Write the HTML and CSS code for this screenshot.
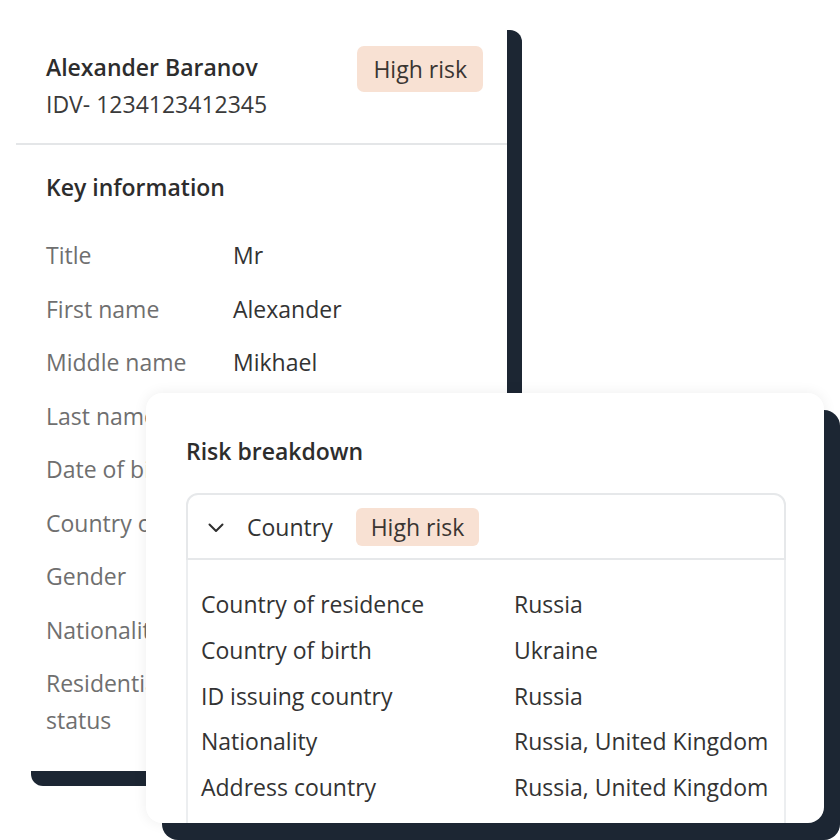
FILE: index.html
```html
<!DOCTYPE html>
<html lang="en">
<head>
<meta charset="utf-8">
<title>Risk profile</title>
<link rel="stylesheet" href="styles.css">
</head>
<body>
<div class="stage">
  <section class="profile-card">
    <header class="profile-head">
      <div class="ident">
        <div class="name">Alexander Baranov</div>
        <div class="idv">IDV- 1234123412345</div>
      </div>
      <span class="badge badge-lg">High risk</span>
    </header>
    <div class="key-info">
      <h2 class="section-title">Key information</h2>
      <dl class="info-grid">
        <dt>Title</dt><dd>Mr</dd>
        <dt>First name</dt><dd>Alexander</dd>
        <dt>Middle name</dt><dd>Mikhael</dd>
        <dt>Last name</dt><dd>Baranov</dd>
        <dt>Date of birth</dt><dd>01/01/1980</dd>
        <dt>Country of birth</dt><dd>Ukraine</dd>
        <dt>Gender</dt><dd>Male</dd>
        <dt>Nationality</dt><dd>Russian</dd>
        <dt>Residential status</dt><dd>Resident</dd>
      </dl>
    </div>
  </section>

  <section class="risk-card">
    <h2 class="section-title">Risk breakdown</h2>
    <div class="accordion">
      <div class="acc-head">
        <svg class="chev" width="16" height="10" viewBox="0 0 16 10" aria-hidden="true"><path d="M1.5 1.5 L8 8 L14.5 1.5" fill="none" stroke="#2f2f2f" stroke-width="2" stroke-linecap="round" stroke-linejoin="round"/></svg>
        <span class="acc-title">Country</span>
        <span class="badge badge-sm">High risk</span>
      </div>
      <dl class="acc-body">
        <dt>Country of residence</dt><dd>Russia</dd>
        <dt>Country of birth</dt><dd>Ukraine</dd>
        <dt>ID issuing country</dt><dd>Russia</dd>
        <dt>Nationality</dt><dd>Russia, United Kingdom</dd>
        <dt>Address country</dt><dd>Russia, United Kingdom</dd>
      </dl>
    </div>
  </section>
</div>
</body>
</html>
```

FILE: styles.css
```css
* { box-sizing: border-box; }

html, body {
  margin: 0;
  padding: 0;
  background: #ffffff;
  font-family: "Open Sans", "Noto Sans", sans-serif;
  font-size: 23px;
  color: #333333;
}

.stage {
  position: relative;
  width: 840px;
  height: 840px;
  overflow: hidden;
  padding: 15px 0 0 16px;
}

.profile-card {
  width: 491px;
  height: 756px;
  background: #ffffff;
  border-radius: 12px;
  box-shadow: 15px 15px 0 0 #1c2633;
}

.profile-head {
  display: flex;
  justify-content: space-between;
  align-items: flex-start;
  padding: 31px 24px 24px 30px;
  border-bottom: 2px solid #e4e6e8;
}

.ident { margin-top: 6px; }

.name {
  font-weight: 600;
  line-height: 30px;
  color: #2d2d2d;
}

.idv {
  margin-top: 7px;
  line-height: 30px;
  color: #3a3a3a;
}

.badge {
  display: inline-block;
  background: #f8e1d3;
  color: #3a3532;
  border-radius: 7px;
  white-space: nowrap;
}

.badge-lg {
  height: 46px;
  line-height: 46px;
  padding: 0 16px;
}

.badge-sm {
  height: 38px;
  line-height: 38px;
  padding: 0 15px;
  border-radius: 6px;
}

.key-info {
  padding: 24px 24px 30px 30px;
}

.section-title {
  margin: 0;
  font-size: 23px;
  font-weight: 600;
  line-height: 37px;
  color: #2d2d2d;
}

.info-grid {
  display: grid;
  grid-template-columns: 182px 1fr;
  column-gap: 5px;
  row-gap: 16.5px;
  margin: 31px 0 0;
  line-height: 37px;
}

.info-grid dt {
  color: #6f6f6f;
}

.info-grid dd {
  margin: 0;
  color: #333333;
}

.risk-card {
  position: absolute;
  left: 146px;
  top: 393px;
  width: 678px;
  height: 430px;
  background: #ffffff;
  border-radius: 16px;
  box-shadow: 16px 17px 0 0 #1c2633, 0 0 14px rgba(0, 0, 0, 0.07);
  padding: 40px 38px 0 40px;
  overflow: hidden;
}

.accordion {
  margin-top: 23px;
}

.acc-head {
  display: flex;
  align-items: center;
  height: 67px;
  padding-left: 20px;
  border: 2px solid #e6e8ea;
  border-radius: 12px 12px 0 0;
}

.chev {
  display: block;
  margin-top: 2px;
}

.acc-title {
  margin-left: 23px;
  margin-right: 23px;
  line-height: 30px;
  color: #333333;
}

.acc-body {
  display: grid;
  grid-template-columns: 313px 1fr;
  margin: 0;
  padding: 22px 0 30px 13px;
  border-left: 2px solid #eceef0;
  border-right: 2px solid #eceef0;
  line-height: 45.75px;
  color: #333333;
}

.acc-body dt { color: #333333; }
.acc-body dd { margin: 0; }
```
